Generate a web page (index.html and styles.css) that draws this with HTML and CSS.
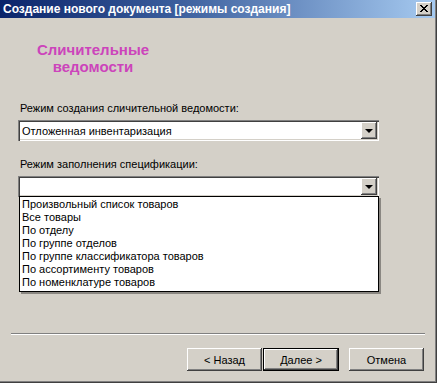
FILE: index.html
```html
<!DOCTYPE html>
<html lang="ru">
<head>
<meta charset="utf-8">
<title>Создание нового документа</title>
<link rel="stylesheet" href="styles.css">
</head>
<body>
<div class="window">
  <div class="titlebar">
    <span class="title">Создание нового документа [режимы создания]</span>
    <span class="close">
      <svg width="8" height="7" viewBox="0 0 8 7"><path d="M0 0h2v1h1v1h2V1h1V0h2v1H7v1H6v1H5v1h1v1h1v1h1v1H6V6H5V5H3v1H2v1H0V6h1V5h1V4h1V3H2V2H1V1H0z" fill="#000"/></svg>
    </span>
  </div>
  <div class="body">
    <div class="heading">Сличительные<br>ведомости</div>
    <div class="label first">Режим создания сличительной ведомости:</div>
    <div class="combo">
      <span class="value">Отложенная инвентаризация</span>
      <span class="drop"><span class="arrow"></span></span>
    </div>
    <div class="label second">Режим заполнения спецификации:</div>
    <div class="combo open">
      <span class="value"></span>
      <span class="drop"><span class="arrow"></span></span>
      <ul class="list">
        <li>Произвольный список товаров</li>
        <li>Все товары</li>
        <li>По отделу</li>
        <li>По группе отделов</li>
        <li>По группе классификатора товаров</li>
        <li>По ассортименту товаров</li>
        <li>По номенклатуре товаров</li>
      </ul>
    </div>
    <div class="separator"></div>
    <div class="buttons">
      <button class="btn">&lt; Назад</button>
      <button class="btn default">Далее &gt;</button>
      <button class="btn cancel">Отмена</button>
    </div>
  </div>
</div>
</body>
</html>
```
FILE: styles.css
```css
* { box-sizing: border-box; }
html, body { margin: 0; padding: 0; }
body {
  font-family: "Liberation Sans", Arial, sans-serif;
  font-size: 11px;
  background: #d4d0c8;
}
.window {
  width: 437px;
  height: 383px;
  background: #d4d0c8;
  box-shadow: inset -1px -1px #404040, inset -2px -2px #808080;
  display: flex;
  flex-direction: column;
  overflow: hidden;
}
.titlebar {
  height: 18px;
  margin-right: 2px;
  background: linear-gradient(to right, #0a246a 0%, #3a5d9c 40%, #a6caf0 100%);
  display: flex;
  align-items: center;
  justify-content: space-between;
  padding: 0 3px 0 3px;
}
.title {
  color: #fff;
  font-weight: bold;
  font-size: 12px;
  white-space: nowrap;
}
.close {
  width: 16px;
  height: 14px;
  background: #d4d0c8;
  box-shadow: inset -1px -1px #404040, inset 1px 1px #fff, inset -2px -2px #808080;
  display: flex;
  align-items: center;
  justify-content: center;
}
.close svg { display: block; margin-top: -1px; }
.body {
  flex: 1;
  display: flex;
  flex-direction: column;
  padding: 0 13px 12px 18px;
}
.heading {
  margin-top: 23px;
  width: 150px;
  text-align: center;
  color: #cc44bb;
  font-weight: bold;
  font-size: 15px;
  line-height: 17px;
}
.label {
  line-height: 14px;
  padding-left: 2px;
  color: #000;
}
.label.first { margin-top: 26px; }
.label.second { margin-top: 16px; }
.combo {
  position: relative;
  margin-top: 5px;
  width: 361px;
  height: 21px;
  background: #fff;
  box-shadow: inset 1px 1px #808080, inset 2px 2px #404040, inset -1px -1px #fff, inset -2px -2px #d4d0c8;
  display: flex;
  align-items: center;
  justify-content: space-between;
  padding: 2px;
}
.value {
  padding-left: 2px;
  line-height: 14px;
}
.drop {
  width: 16px;
  height: 17px;
  background: #d4d0c8;
  box-shadow: inset -1px -1px #404040, inset 1px 1px #fff, inset -2px -2px #808080;
  display: flex;
  align-items: center;
  justify-content: center;
}
.arrow {
  width: 0;
  height: 0;
  border-left: 4px solid transparent;
  border-right: 4px solid transparent;
  border-top: 4px solid #000;
  margin-left: -1px;
}
.list {
  position: absolute;
  top: 20px;
  left: 1px;
  width: 360px;
  margin: 0;
  padding: 1px 0 2px 0;
  list-style: none;
  background: #fff;
  border: 1px solid #000;
  box-shadow: 2px 2px 0 #8a8782;
  z-index: 2;
}
.list li {
  line-height: 13px;
  padding-left: 2px;
  white-space: nowrap;
}
.separator {
  margin-top: auto;
  margin-left: -7px;
  width: 414px;
  height: 2px;
  border-top: 1px solid #808080;
  border-bottom: 1px solid #fff;
}
.buttons {
  margin-top: 13px;
  display: flex;
  justify-content: flex-end;
}
.btn {
  font-family: "Liberation Sans", Arial, sans-serif;
  font-size: 11px;
  color: #000;
  width: 75px;
  height: 23px;
  background: #d4d0c8;
  border: none;
  padding: 0;
  box-shadow: inset -1px -1px #404040, inset 1px 1px #fff, inset -2px -2px #808080;
}
.btn.default {
  margin-left: 1px;
  width: 76px;
  box-shadow: inset 0 0 0 1px #000, inset -2px -2px #404040, inset 2px 2px #fff, inset -3px -3px #808080;
}
.btn.cancel { margin-left: 10px; }
```
